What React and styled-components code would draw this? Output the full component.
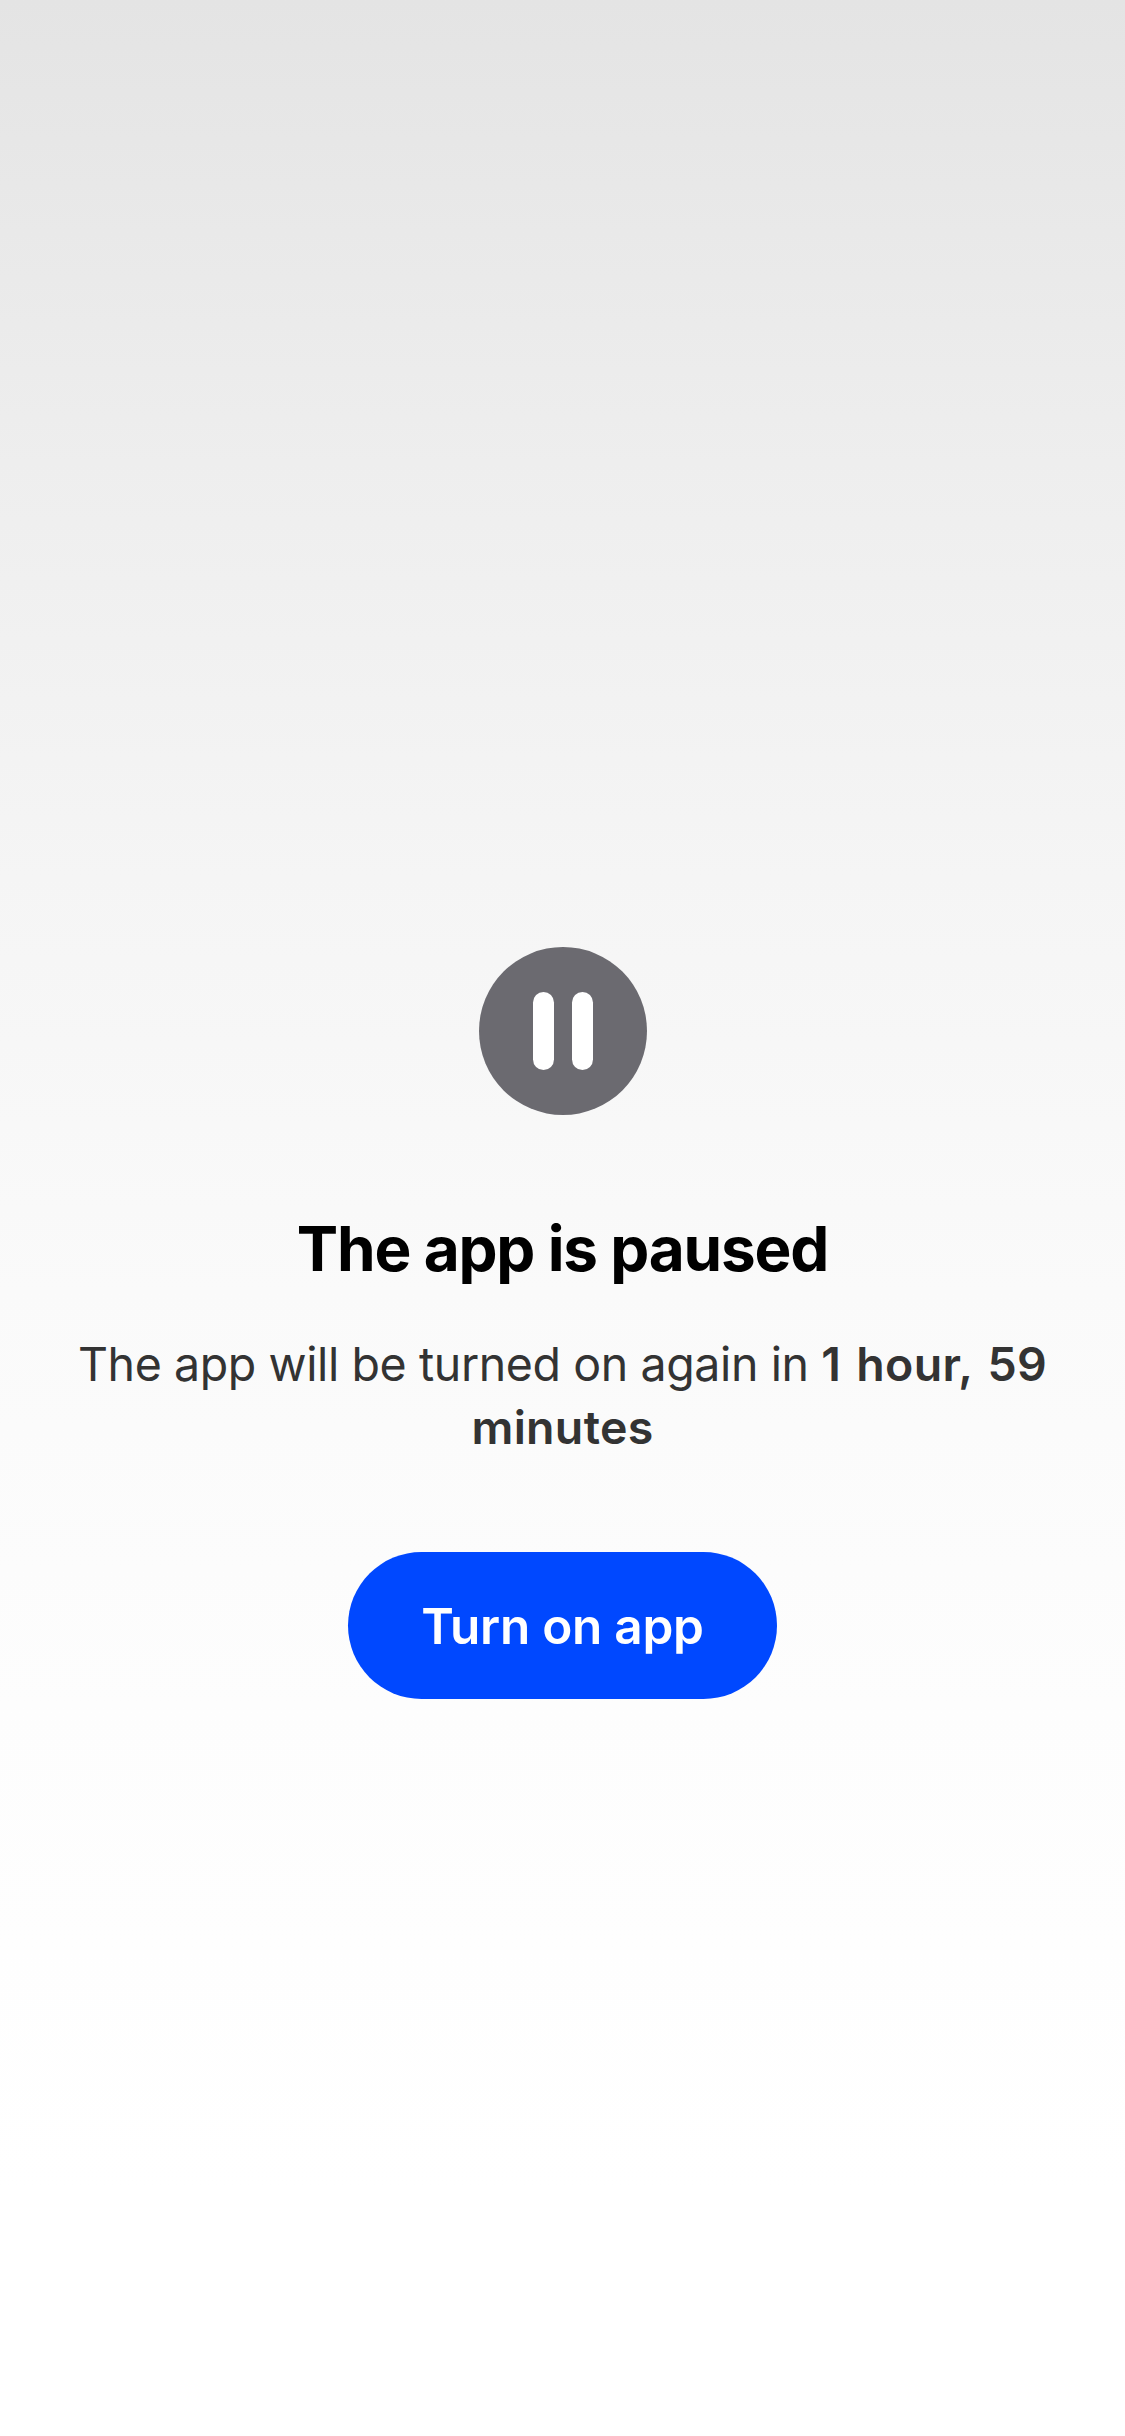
import React from "react";
import styled, { createGlobalStyle } from "styled-components";

const Global = createGlobalStyle`
  * { box-sizing: border-box; }
  body { margin: 0; font-family: Inter, "Liberation Sans", sans-serif; }
`;
const Screen = styled.main`
  width: 1125px;
  height: 2436px;
  padding: 947px 0 0;
  display: flex;
  flex-direction: column;
  align-items: center;
  text-align: center;
  background: linear-gradient(180deg, #e4e4e4 0%, #eeeeee 19%, #f5f5f5 36%, #fafafa 53%, #fdfdfd 70%, #ffffff 90%);
`;
const PauseBadge = styled.svg`
  display: block;
  width: 168px;
  height: 168px;
`;
const Title = styled.h1`
  margin: 96px 0 0;
  font-size: 62px;
  line-height: 75px;
  font-weight: 700;
  letter-spacing: -1.2px;
  color: #000;
  white-space: nowrap;
`;
const Message = styled.p`
  margin: 47px 0 0;
  font-size: 46.5px;
  line-height: 63px;
  letter-spacing: -0.4px;
  color: #333;
`;
const Line = styled.span`
  display: block;
  white-space: nowrap;
`;
const Remaining = styled.strong`
  font-weight: 600;
  letter-spacing: 0.3px;
  word-spacing: 3px;
`;
const Button = styled.button`
  margin: 93px 0 0;
  width: 429px;
  height: 147px;
  border: 0;
  border-radius: 74px;
  background: #0048ff;
  color: #fff;
  font: 600 49.5px/60px Inter, sans-serif;
  letter-spacing: -0.27px;
  white-space: nowrap;
`;

export default function App() {
  return (
    <>
      <Global />
      <Screen>
        <PauseBadge viewBox="0 0 168 168">
          <circle cx="84" cy="84" r="84" fill="#6b6a70" />
          <rect x="54" y="45" width="21" height="78" rx="10.5" fill="#fff" />
          <rect x="93" y="45" width="21" height="78" rx="10.5" fill="#fff" />
        </PauseBadge>
        <Title>The app is paused</Title>
        <Message>
          <Line>The app will be turned on again in <Remaining>1 hour, 59</Remaining></Line>
          <Line><Remaining>minutes</Remaining></Line>
        </Message>
        <Button>Turn on app</Button>
      </Screen>
    </>
  );
}
